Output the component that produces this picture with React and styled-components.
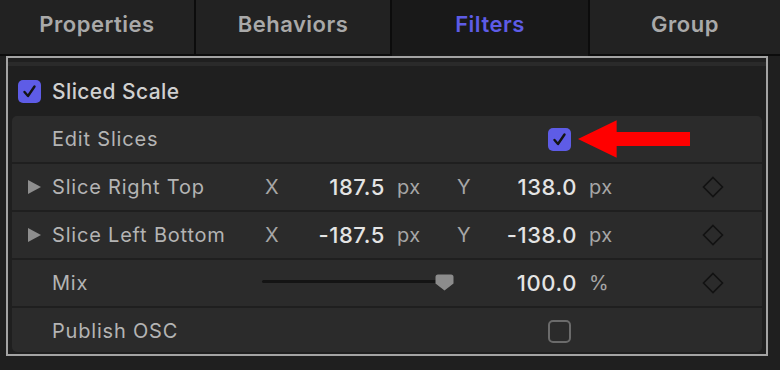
import React from 'react';
import styled, { createGlobalStyle } from 'styled-components';

const GlobalStyle = createGlobalStyle`
  html, body {
    margin: 0;
    padding: 0;
    background: #1f1f1f;
    font-family: Inter, "Noto Sans", sans-serif;
  }
`;

const Page = styled.div`
  width: 780px;
  height: 370px;
  background: #1f1f1f;
  overflow: hidden;
`;

const TabBar = styled.div`
  display: grid;
  grid-template-columns: 194px 194px 196px 1fr;
  column-gap: 2px;
  background: #0c0c0c;
  height: 56px;
`;

const Tab = styled.div`
  display: flex;
  align-items: center;
  justify-content: center;
  box-sizing: border-box;
  height: ${p => (p.$active ? '56px' : '54px')};
  padding-bottom: ${p => (p.$active ? '9px' : '7px')};
  background: ${p => (p.$active ? '#191919' : '#222222')};
  color: ${p => (p.$active ? '#5e5ce6' : '#a9a9a9')};
  font-size: 22px;
  font-weight: 600;
  letter-spacing: 0.5px;
`;

const Panel = styled.div`
  margin: 0 12px 0 6px;
  height: 300px;
  box-sizing: border-box;
  border: 2px solid #a3a3a3;
  background: #1f1f1f;
  display: flex;
  flex-direction: column;
  padding: 4px 4px 2px;
`;

const Band = styled.div`
  height: 4px;
  margin: 0 -4px;
  background: #2a2a2a;
`;

const Header = styled.div`
  display: flex;
  align-items: center;
  gap: 11px;
  height: 50px;
  padding-left: 6px;
  color: #d0d0d0;
  font-size: 21px;
  font-weight: 500;
  letter-spacing: 0.4px;
`;

const Group = styled.div`
  flex: 1;
  background: #2b2b2b;
  border-radius: 5px;
  display: flex;
  flex-direction: column;
  overflow: hidden;
`;

const Row = styled.div`
  display: grid;
  grid-template-columns: 40px 213px 32px 88px 72px 32px 88px 113px 46px;
  align-items: center;
  height: ${p => (p.$last ? '42px' : '46px')};
  padding-top: ${p => (p.$last ? '2px' : '0')};
  border-bottom: ${p => (p.$last ? 'none' : '2px solid #1f1f1f')};
  font-size: 20px;
`;

const Disclosure = styled.div`
  justify-self: center;
  width: 0;
  height: 0;
  margin-left: 4px;
  border-top: 7px solid transparent;
  border-bottom: 7px solid transparent;
  border-left: 13px solid #8e8e8e;
`;

const Label = styled.div`
  grid-column: 2;
  color: #b4b4b4;
  white-space: nowrap;
  letter-spacing: 0.8px;
`;

const Axis = styled.div`
  color: #a6a6a6;
  font-size: 20px;
`;

const Value = styled.div`
  justify-self: end;
  color: #e4e4e4;
  font-weight: 500;
  font-size: 22px;
  letter-spacing: 0.6px;
  grid-column: ${p => p.$col};
`;

const Unit = styled.div`
  padding-left: 12px;
  color: #a6a6a6;
  font-size: 20px;
  letter-spacing: 0.4px;
  grid-column: ${p => p.$col};
`;

const Box = styled.div`
  width: 23px;
  height: 23px;
  box-sizing: border-box;
  border-radius: 5px;
  display: flex;
  align-items: center;
  justify-content: center;
  background: ${p => (p.$checked ? '#5e5ce6' : 'transparent')};
  border: ${p => (p.$checked ? 'none' : '2px solid #6b6b6b')};
`;

const RowCheck = styled.div`
  grid-column: 7;
  justify-self: end;
  margin-right: 6px;
  display: flex;
`;

const ArrowCell = styled.div`
  grid-column: 8;
  display: flex;
  align-items: center;
`;

const KeyCell = styled.div`
  grid-column: 9;
  display: flex;
  justify-content: center;
`;

const Slider = styled.div`
  grid-column: 3 / 6;
  position: relative;
  margin-left: -3px;
  width: 192px;
  height: 18px;
`;

const Track = styled.div`
  position: absolute;
  left: 0;
  right: 10px;
  top: 6px;
  height: 3px;
  background: #141414;
  border-radius: 2px;
`;

const Thumb = styled.svg`
  position: absolute;
  right: 0;
  top: 0;
`;

const Check = ({ checked }) => (
  <Box $checked={checked}>
    {checked && (
      <svg width="15" height="15" viewBox="0 0 15 15">
        <path d="M2.5 8 L6 12 L12.5 2.5" fill="none" stroke="#141414" strokeWidth="2.4" strokeLinecap="round" strokeLinejoin="round" />
      </svg>
    )}
  </Box>
);

const Keyframe = () => (
  <svg width="22" height="22" viewBox="0 0 22 22">
    <path d="M11 1.5 L20.5 11 L11 20.5 L1.5 11 Z" fill="none" stroke="#121212" strokeWidth="1.6" />
  </svg>
);

const RedArrow = () => (
  <svg width="114" height="40" viewBox="0 0 114 40">
    <path d="M1 20 L40 1 L40 13 L114 13 L114 27 L40 27 L40 39 Z" fill="#ff0000" />
  </svg>
);

export default function App() {
  return (
    <Page>
      <GlobalStyle />
      <TabBar>
        <Tab>Properties</Tab>
        <Tab>Behaviors</Tab>
        <Tab $active>Filters</Tab>
        <Tab>Group</Tab>
      </TabBar>
      <Panel>
        <Band />
        <Header>
          <Check checked />
          Sliced Scale
        </Header>
        <Group>
          <Row>
            <Label>Edit Slices</Label>
            <RowCheck><Check checked /></RowCheck>
            <ArrowCell><RedArrow /></ArrowCell>
          </Row>
          <Row>
            <Disclosure />
            <Label>Slice Right Top</Label>
            <Axis>X</Axis>
            <Value $col={4}>187.5</Value>
            <Unit $col={5}>px</Unit>
            <Axis>Y</Axis>
            <Value $col={7}>138.0</Value>
            <Unit $col={8}>px</Unit>
            <KeyCell><Keyframe /></KeyCell>
          </Row>
          <Row>
            <Disclosure />
            <Label>Slice Left Bottom</Label>
            <Axis>X</Axis>
            <Value $col={4}>-187.5</Value>
            <Unit $col={5}>px</Unit>
            <Axis>Y</Axis>
            <Value $col={7}>-138.0</Value>
            <Unit $col={8}>px</Unit>
            <KeyCell><Keyframe /></KeyCell>
          </Row>
          <Row>
            <Label>Mix</Label>
            <Slider>
              <Track />
              <Thumb width="19" height="17" viewBox="0 0 19 17">
                <path d="M3 0.5 H16 A2.5 2.5 0 0 1 18.5 3 V9.5 L9.5 16.5 L0.5 9.5 V3 A2.5 2.5 0 0 1 3 0.5 Z" fill="#8c8c8c" />
              </Thumb>
            </Slider>
            <Value $col={7}>100.0</Value>
            <Unit $col={8}>%</Unit>
            <KeyCell><Keyframe /></KeyCell>
          </Row>
          <Row $last>
            <Label>Publish OSC</Label>
            <RowCheck><Check /></RowCheck>
          </Row>
        </Group>
      </Panel>
    </Page>
  );
}
